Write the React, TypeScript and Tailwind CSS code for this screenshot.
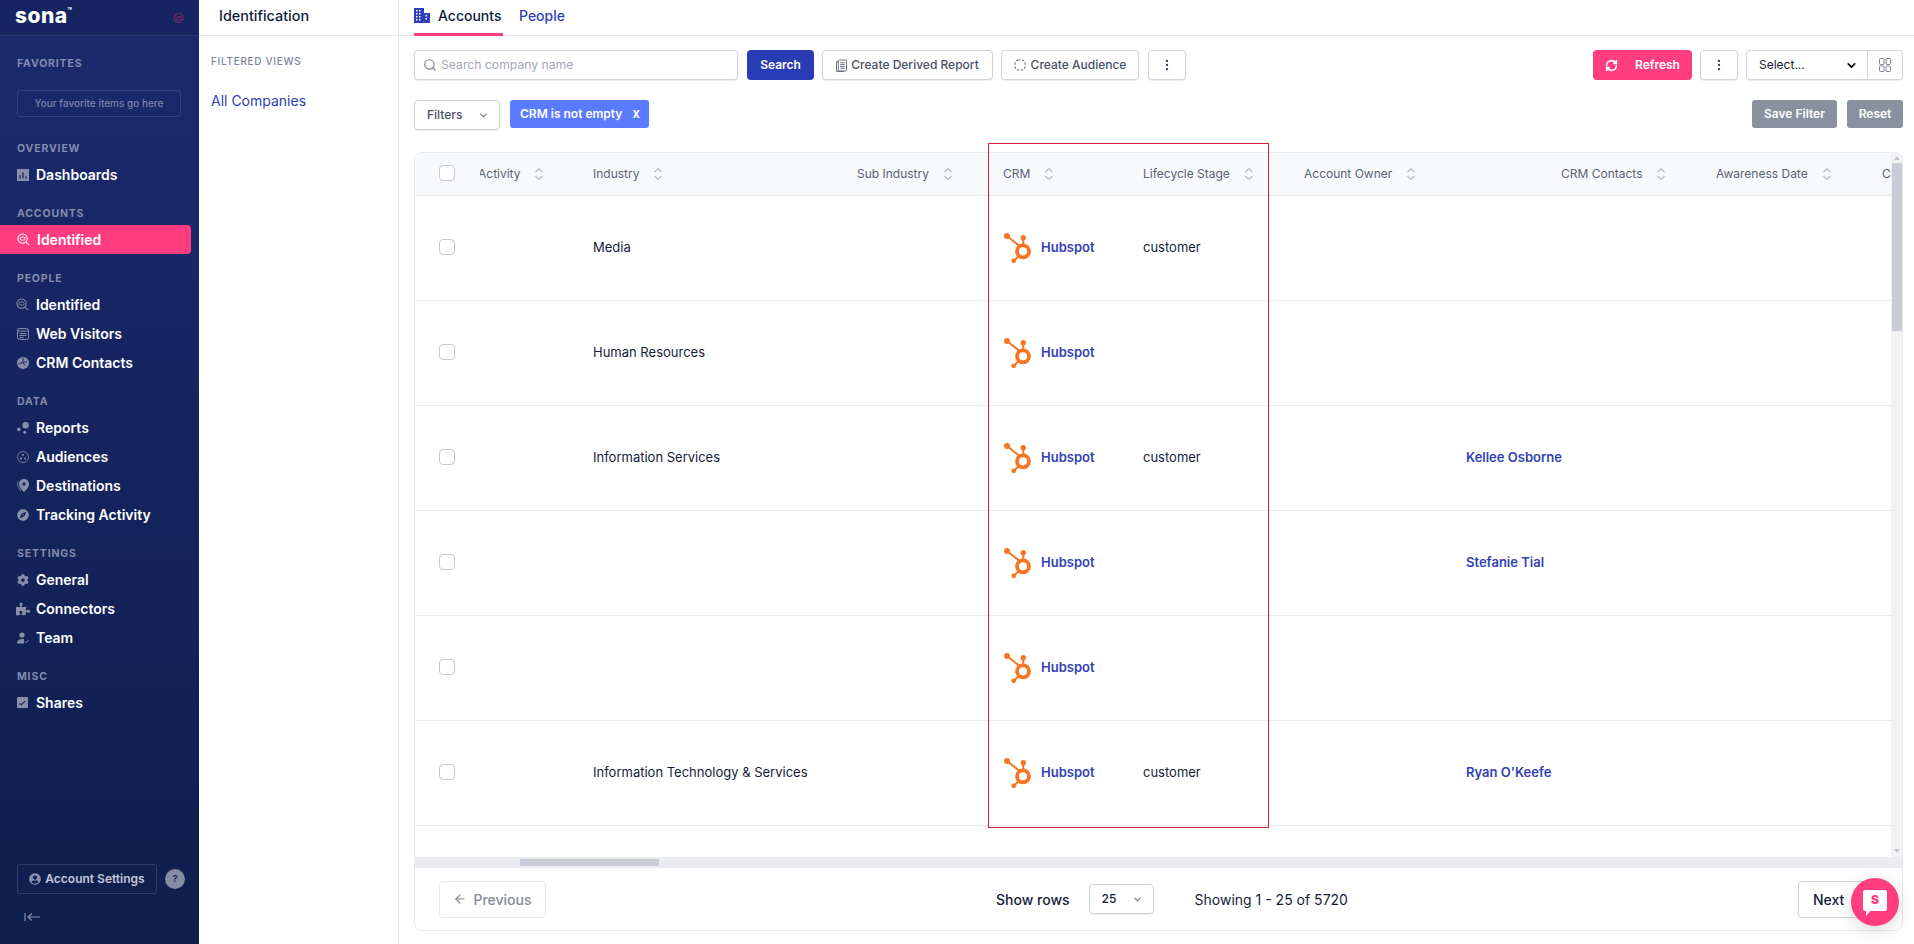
import React from 'react';
import { ArrowLeft, ChevronDown, EllipsisVertical, Search, RefreshCw } from 'lucide-react';
import { FaCog, FaPuzzlePiece, FaCompass, FaUserCircle } from 'react-icons/fa';

const Dash = () => (
  <svg viewBox="0 0 12 12" className="w-3 h-3"><rect width="12" height="12" fill="#8a8fa9" /><path d="M3 6v3.5M6 3.5v6M9 7.5v2" stroke="#1a2764" strokeWidth="1.3" /></svg>
);
const Lens = () => (
  <svg viewBox="0 0 14 14" className="w-[13px] h-[13px]" fill="none" stroke="currentColor"><circle cx="6" cy="6" r="5" strokeWidth="1.1" /><rect x="3.2" y="4.4" width="5.6" height="3.2" rx="1.6" strokeWidth="1" /><path d="M9.8 9.8l3.4 3.4" strokeWidth="1.1" /></svg>
);
const WebIcon = () => (
  <svg viewBox="0 0 12 12" className="w-3 h-3" fill="none" stroke="#8a8fa9"><rect x=".5" y=".5" width="11" height="11" rx="2" /><path d="M.5 3h11M2.5 5.5h7M2.5 7.5h7M2.5 9.5h4" /></svg>
);
const ContactsIcon = () => (
  <svg viewBox="0 0 12 12" className="w-3 h-3"><circle cx="6" cy="6" r="6" fill="#8a8fa9" /><path d="M6 1v4M1.5 7l4-1.5 3 3M6 5.5l4-1" stroke="#1a2764" strokeWidth="1" fill="none" /></svg>
);
const ReportsIcon = () => (
  <svg viewBox="0 0 12 12" className="w-3 h-3" fill="#8a8fa9"><circle cx="8.6" cy="3.2" r="3.2" /><circle cx="1.8" cy="7.4" r="1.8" /><circle cx="7.8" cy="10.2" r="1.5" /></svg>
);
const AudIcon = () => (
  <svg viewBox="0 0 12 12" className="w-3 h-3" fill="#8a8fa9"><circle cx="6" cy="6" r="5.5" fill="none" stroke="#8a8fa9" strokeWidth=".8" /><circle cx="6" cy="4" r="1" /><circle cx="4" cy="7.4" r="1" /><circle cx="8" cy="7.4" r="1" /></svg>
);
const PinIcon = () => (
  <svg viewBox="0 0 12 13" className="w-3 h-[13px]"><path d="M7 0a5 5 0 0 1 5 5c0 3-3 6-5 8-2-2-5-5-5-8a5 5 0 0 1 5-5z" fill="#8a8fa9" /><circle cx="7" cy="5" r="1.7" fill="#1a2764" /><path d="M1.5 2C0 4 0 6 1.5 8.5L4 12" stroke="#8a8fa9" strokeWidth=".8" fill="none" /></svg>
);
const TeamIcon = () => (
  <svg viewBox="0 0 12 12" className="w-3 h-3" fill="#8a8fa9"><circle cx="5" cy="3" r="2.6" /><path d="M0 11.5c0-3 2-4.5 5-4.5 1 0 1.5.1 2 .3v4.2z" /><path d="M8 9.5l1.2 1.2 2.3-2.5" stroke="#8a8fa9" fill="none" /></svg>
);
const ShareIcon = () => (
  <svg viewBox="0 0 12 12" className="w-[11px] h-[11px]"><rect width="12" height="12" rx="1" fill="#8a8fa9" /><path d="M2.5 7l2 1.5L9 4.5" stroke="#1a2764" strokeWidth="1.3" fill="none" /></svg>
);

const Hubspot = () => (
  <svg viewBox="0 0 28 31" className="w-7 h-[31px] mt-[2px] shrink-0" fill="#f97524">
    <circle cx="19" cy="18.3" r="6" fill="none" stroke="#f97524" strokeWidth="3.8" />
    <circle cx="19.3" cy="4.7" r="2.7" />
    <circle cx="3" cy="3" r="3" />
    <circle cx="9.7" cy="27.8" r="2.4" />
    <path d="M19.3 5v8M3 3l12 9.5M9.7 27.8l5-4.5" stroke="#f97524" strokeWidth="2" fill="none" />
  </svg>
);

const SectionLabel = ({ children }: { children: React.ReactNode }) => (
  <div className="h-[15px] mb-1 pl-[17px] text-[10.5px] leading-[15px] font-bold tracking-[0.08em] text-[#858bab]">{children}</div>
);

const NavItem = ({ icon, label, active }: { icon: React.ReactNode; label: string; active?: boolean }) => (
  <div className={`h-[29px] flex items-center gap-[7px] w-[191px] rounded-r-[4px] ${active ? 'bg-[#ff3d7f] pl-[17px] text-white' : 'pl-4 text-[#8a8fa9]'}`}>
    <span className="w-[13px] flex items-center justify-center shrink-0">{icon}</span>
    <span className="text-[14px] font-semibold text-white">{label}</span>
  </div>
);

const groups: { title: string; items: { icon: React.ReactNode; label: string; active?: boolean }[] }[] = [
  { title: 'OVERVIEW', items: [{ icon: <Dash />, label: 'Dashboards' }] },
  { title: 'ACCOUNTS', items: [{ icon: <Lens />, label: 'Identified', active: true }] },
  { title: 'PEOPLE', items: [{ icon: <Lens />, label: 'Identified' }, { icon: <WebIcon />, label: 'Web Visitors' }, { icon: <ContactsIcon />, label: 'CRM Contacts' }] },
  { title: 'DATA', items: [{ icon: <ReportsIcon />, label: 'Reports' }, { icon: <AudIcon />, label: 'Audiences' }, { icon: <PinIcon />, label: 'Destinations' }, { icon: <FaCompass className="w-3 h-3" />, label: 'Tracking Activity' }] },
  { title: 'SETTINGS', items: [{ icon: <FaCog className="w-3 h-3" />, label: 'General' }, { icon: <FaPuzzlePiece className="w-[14px] h-[14px] shrink-0" />, label: 'Connectors' }, { icon: <TeamIcon />, label: 'Team' }] },
  { title: 'MISC', items: [{ icon: <ShareIcon />, label: 'Shares' }] },
];

const Sidebar = () => (
  <aside className="w-[199px] shrink-0 h-full flex flex-col bg-gradient-to-b from-[#1b2a6e] to-[#0e1e4d]">
    <div className="h-[36px] shrink-0 flex items-center justify-between pl-[15px] pr-[15px] bg-[#172462] border-b border-[#2b3877]">
      <div className="text-white font-extrabold text-[21px] tracking-[0.02em] leading-none flex items-start -mt-1">
        sona<span className="text-[7px] font-bold mt-[2px]">™</span>
      </div>
      <span className="text-[11px] text-[#76265f] font-semibold">@</span>
    </div>
    <div className="pt-5">
      <SectionLabel>FAVORITES</SectionLabel>
      <div className="mx-[17px] mt-[19px] w-[164px] h-[27px] rounded-[3px] border border-[#323f80] flex items-center justify-center text-[10px] font-medium text-[#7c83a8]">Your favorite items go here</div>
    </div>
    <div className="pt-[24px] flex flex-col gap-[17px]">
      {groups.map(g => (
        <div key={g.title}>
          <SectionLabel>{g.title}</SectionLabel>
          {g.items.map(i => <NavItem key={g.title + i.label} {...i} />)}
        </div>
      ))}
    </div>
    <div className="mt-auto pl-[17px] pb-[22px]">
      <div className="flex items-center gap-2">
        <div className="w-[140px] h-[30px] rounded-[3px] border border-[#2f3a6b] flex items-center justify-center gap-1 text-[12px] font-semibold text-[#c5c8d6]">
          <FaUserCircle className="w-3 h-3 text-[#8a8fa9]" />Account Settings
        </div>
        <div className="w-5 h-5 rounded-full bg-[#868ba3] flex items-center justify-center text-[9px] font-bold text-[#1a2764]">?</div>
      </div>
      <svg viewBox="0 0 16 10" className="w-4 h-[10px] ml-[7px] mt-[18px]" fill="none" stroke="#8a8fa9" strokeWidth="1.2"><path d="M1 1v8M4 5h12M8 1.5L4 5l4 3.5" /></svg>
    </div>
  </aside>
);

const Views = () => (
  <div className="w-[200px] shrink-0 h-full border-r border-[#e5e7eb]">
    <div className="h-[36px] border-b border-[#e5e7eb] flex items-center pl-5 pb-[3px] text-[14.4px] font-medium text-[#111c3d]">Identification</div>
    <div className="pl-3 pt-[19px] text-[10px] leading-[12px] font-medium tracking-[0.07em] text-[#7d849f]">FILTERED VIEWS</div>
    <div className="pl-3 pt-[26px] text-[14px] leading-[16px] text-[#2f3fb5]">All Companies</div>
  </div>
);

const btn = 'h-[30px] flex items-center justify-center rounded-[4px] border border-[#cfd2da] bg-white shadow-[0_1px_1px_rgba(16,24,40,0.08)] text-[12px] font-medium text-[#4a5166]';

const Toolbar = () => (
  <div className="flex items-center h-[30px]">
    <div className={`${btn} w-[324px] !justify-start pl-2 gap-1`}>
      <Search className="w-[14px] h-[14px] text-[#7d8294]" />
      <input placeholder="Search company name" className="flex-1 min-w-0 outline-none bg-transparent text-[12.2px] placeholder:text-[#a3a7b3] font-normal" />
    </div>
    <div className="ml-[9px] w-[67px] h-[30px] rounded-[4px] bg-[#2a3cb4] text-white text-[12px] font-semibold flex items-center justify-center">Search</div>
    <div className={`${btn} ml-2 w-[171px] gap-1`}>
      <svg viewBox="0 0 12 14" className="w-[11px] h-[13px]" fill="none" stroke="#5a6072"><rect x="2.5" y="1" width="9" height="12" rx="1" /><path d="M2.5 3H.5v10.5h8V13M4.5 4h5M4.5 6h5M4.5 8h5M4.5 10h5" /></svg>
      Create Derived Report
    </div>
    <div className={`${btn} ml-2 w-[138px] gap-[5px]`}>
      <svg viewBox="0 0 12 12" className="w-3 h-3" fill="none" stroke="#5a6072" strokeDasharray="2.5 1.5"><rect x="1" y="1" width="10" height="10" rx="3" /></svg>
      Create Audience
    </div>
    <div className={`${btn} ml-[9px] w-[38px]`}><EllipsisVertical className="w-[14px] h-[14px] text-[#3c4257]" /></div>
    <div className="ml-auto w-[99px] h-[30px] rounded-[4px] bg-[#ff3d7f] text-white text-[12px] font-semibold flex items-center gap-[17px] pl-3">
      <RefreshCw className="w-[13px] h-[13px]" strokeWidth={3} />Refresh
    </div>
    <div className={`${btn} ml-2 w-[38px]`}><EllipsisVertical className="w-[14px] h-[14px] text-[#3c4257]" /></div>
    <div className={`${btn} ml-2 w-[157px] !justify-start`}>
      <div className="w-[121px] h-full flex items-center justify-between pl-3 pr-[9px] border-r border-[#cfd2da] text-[#1a2233] font-normal">
        Select...<ChevronDown className="w-[13px] h-[13px] text-black" strokeWidth={3} />
      </div>
      <div className="flex-1 flex items-center justify-center">
        <svg viewBox="0 0 12 14" className="w-3 h-[14px]" fill="none" stroke="#7d8294"><rect x=".5" y=".5" width="4.5" height="6" rx="1" /><rect x="7" y=".5" width="4.5" height="6" rx="1" /><rect x=".5" y="8" width="4.5" height="5.5" rx="1" /><rect x="7" y="8" width="4.5" height="5.5" rx="1" /></svg>
      </div>
    </div>
  </div>
);

const FilterRow = () => (
  <div className="flex items-center h-[30px] mt-5">
    <div className={`${btn} w-[86px] !justify-between pl-3 pr-[10px]`}>Filters<ChevronDown className="w-[11px] h-[11px] text-[#7d8294]" strokeWidth={3} /></div>
    <div className="ml-[10px] w-[139px] h-[28px] -mt-[2px] rounded-[3px] bg-[#5a7bff] text-white text-[12px] font-semibold flex items-center justify-between pl-[10px] pr-[9px]">CRM is not empty<span className="text-[13px]">x</span></div>
    <div className="ml-auto w-[85px] h-[28px] -mt-[2px] rounded-[3px] bg-[#8b90a0] text-white text-[12px] font-semibold flex items-center justify-center">Save Filter</div>
    <div className="ml-[10px] w-[56px] h-[28px] -mt-[2px] rounded-[3px] bg-[#8b90a0] text-white text-[12px] font-semibold flex items-center justify-center">Reset</div>
  </div>
);

const cols = 'grid grid-cols-[65px_113px_264px_146px_140px_161px_257px_155px_166px_100px] w-[1567px]';

const SortIcon = ({ gap = 'ml-[14px]' }: { gap?: string }) => (
  <svg viewBox="0 0 10 14" className={`w-[10px] h-[14px] shrink-0 ${gap}`} fill="none" stroke="#b4b8c3" strokeWidth="1.1"><path d="M1.5 5L5 1.5 8.5 5M1.5 9L5 12.5 8.5 9" /></svg>
);

const Head = ({ label, gap }: { label: string; gap?: string }) => (
  <div className="flex items-center whitespace-nowrap">{label}<SortIcon gap={gap} /></div>
);

const rows = [
  { industry: 'Media', stage: 'customer', owner: '' },
  { industry: 'Human Resources', stage: '', owner: '' },
  { industry: 'Information Services', stage: 'customer', owner: 'Kellee Osborne' },
  { industry: '', stage: '', owner: 'Stefanie Tial' },
  { industry: '', stage: '', owner: '' },
  { industry: 'Information Technology & Services', stage: 'customer', owner: "Ryan O'Keefe" },
];

const Check = () => <div className="w-[16px] h-[16px] ml-[24px] -mt-[2px] rounded-[4px] border border-[#c5c8d2] bg-white" />;

const Table = () => (
  <div className="flex-1 min-h-0 flex">
    <div className="flex-1 min-w-0 overflow-hidden">
      <div className={`${cols} h-[43px] items-center bg-[#f8f9fb] border-b border-[#e9eaee] text-[12px] text-[#5b6175]`}>
        <Check />
        <div className="overflow-hidden"><div className="-ml-[2px]"><Head label="Activity" gap="ml-[13px]" /></div></div>
        <Head label="Industry" />
        <Head label="Sub Industry" />
        <Head label="CRM" />
        <Head label="Lifecycle Stage" />
        <Head label="Account Owner" />
        <Head label="CRM Contacts" />
        <Head label="Awareness Date" />
        <div className="whitespace-nowrap">Co</div>
      </div>
      {rows.map((r, i) => (
        <div key={i} className={`${cols} h-[105px] items-center border-b border-[#e9eaee] text-[13px] text-[#141c3a]`}>
          <Check />
          <div />
          <div className="whitespace-nowrap">{r.industry}</div>
          <div />
          <div className="flex items-center gap-[9px] ml-[1px] -mt-[1px]">
            <Hubspot />
            <span className="font-semibold text-[#3341b5]">Hubspot</span>
          </div>
          <div>{r.stage}</div>
          <div className="pl-[162px] whitespace-nowrap font-semibold text-[#3341b5]">{r.owner}</div>
        </div>
      ))}
    </div>
    <div className="w-[11px] shrink-0 bg-[#f1f2f4] flex flex-col items-center pt-[3px]">
      <svg viewBox="0 0 6 4" className="w-[6px] h-1 fill-[#c0c3cc]"><path d="M3 0l3 4H0z" /></svg>
      <div className="mt-[3px] w-[10px] h-[168px] bg-[#c9ccd6]" />
      <svg viewBox="0 0 6 4" className="mt-auto mb-[4px] w-[6px] h-1 fill-[#c0c3cc]"><path d="M3 4l3-4H0z" /></svg>
    </div>
  </div>
);

const Footer = () => (
  <div className="h-[62px] shrink-0 flex items-center pl-[24px] pr-[24px] text-[14px] text-[#141c3a]">
    <div className="w-[107px] h-[37px] rounded-[4px] border border-[#e6e7ec] flex items-center justify-center gap-[6px] text-[#858a9b] font-medium">
      <ArrowLeft className="w-[14px] h-[14px]" />Previous
    </div>
    <div className="ml-[450px] font-medium">Show rows</div>
    <div className="ml-[19px] w-[65px] h-[30px] rounded-[4px] border border-[#cfd2da] shadow-[0_1px_1px_rgba(16,24,40,0.08)] flex items-center justify-between pl-3 pr-[10px] text-[12px] font-medium">25<ChevronDown className="w-[11px] h-[11px] text-[#7d8294]" strokeWidth={3} /></div>
    <div className="ml-[41px]">Showing 1 - 25 of 5720</div>
    <div className="ml-auto w-[80px] h-[37px] rounded-[4px] border border-[#cfd2da] flex items-center pl-[14px] font-medium">Next</div>
  </div>
);

export default function App() {
  return (
    <div className="relative h-[944px] w-[1914px] overflow-hidden bg-white flex font-['Inter',sans-serif]">
      <Sidebar />
      <Views />
      <main className="flex-1 min-w-0 flex flex-col">
        <div className="h-[36px] shrink-0 border-b border-[#e5e7eb] flex items-end pl-[15px] gap-4">
          <div className="w-[89px] h-[36px] border-b-[3px] border-[#ff3d7f] flex items-center gap-2 -mb-[1px] pb-[3px]">
            <svg viewBox="0 0 16 15" className="w-4 h-[15px]" fill="#2f3fb5"><path d="M0 0h10v15H0zM10 5h6v10h-6z" /><path d="M2 2h1.5v1.5H2zM5 2h1.5v1.5H5zM2 5h1.5v1.5H2zM5 5h1.5v1.5H5zM2 8h1.5v1.5H2zM5 8h1.5v1.5H5zM2 11h1.5v1.5H2zM5 11h1.5v1.5H5zM11.5 7H13v1.5h-1.5zM11.5 10H13v1.5h-1.5z" fill="#fff" /></svg>
            <span className="text-[14px] font-medium text-[#111c3d]">Accounts</span>
          </div>
          <div className="h-[36px] flex items-center pb-[3px] text-[14px] font-medium text-[#2f3fb5]">People</div>
        </div>
        <div className="flex-1 min-h-0 flex flex-col pl-[15px] pr-[11px] pt-[14px] pb-[13px]">
          <Toolbar />
          <FilterRow />
          <div className="mt-[22px] flex-1 min-h-0 flex flex-col rounded-lg border border-[#e9eaee] overflow-hidden">
            <Table />
            <div className="h-[11px] shrink-0 bg-[#ebecf0] flex items-center pl-[105px]">
              <div className="w-[139px] h-[7px] bg-[#c9ccd6]" />
            </div>
            <Footer />
          </div>
        </div>
      </main>
      <div className="absolute left-[988px] top-[143px] w-[281px] h-[685px] border border-[#d8222f] pointer-events-none" />
      <div className="absolute left-[1851px] top-[878px] w-[48px] h-[48px] rounded-full bg-[#ff3d7f] shadow-[0_4px_16px_rgba(0,0,0,0.15)] flex items-center justify-center">
        <div className="relative w-[24px] h-[21px] rounded-[2px] bg-white flex items-center justify-center text-[12px] font-black text-[#ff3d7f] -mt-1">
          S
          <span className="absolute left-[3px] -bottom-[5px] w-0 h-0 border-t-[6px] border-r-[5px] border-t-white border-r-transparent" />
        </div>
      </div>
    </div>
  );
}
